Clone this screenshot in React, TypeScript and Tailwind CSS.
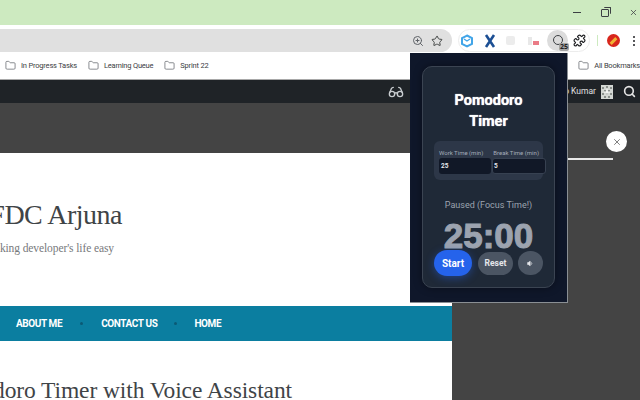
import { Folder, Glasses, Puzzle, Search, Star, Volume1, X, ZoomIn } from "lucide-react";

const bookmarks = ["In Progress Tasks", "Learning Queue", "Sprint 22"];

function Bookmark({ label }: { label: string }) {
  return (
    <div className="flex items-center gap-[5px]">
      <Folder className="h-[11px] w-[11px] text-[#5f6368]" strokeWidth={1.6} />
      <span className="font-['Roboto',sans-serif] text-[7.5px] tracking-[-0.2px] text-[#3c4043]">{label}</span>
    </div>
  );
}

function QrCode() {
  return (
    <svg width="12" height="14" viewBox="0 0 12 14" className="shrink-0">
      <rect width="12" height="14" fill="#d4d8d4" />
      <path d="M1 2h2v2H1zM5 1h2v2H5zM9 2h2v2H9zM3 5h2v2H3zM7 5h2v2H7zM1 8h2v2H1zM5 8h2v2H5zM9 8h2v2H9zM3 11h2v2H3zM7 11h2v2H7z" fill="#8a908c" />
      <path d="M6 4v6M3 7h6" stroke="#fff" strokeWidth="1" />
    </svg>
  );
}

function Toolbar() {
  return (
    <div className="flex h-[23px] shrink-0 items-center">
      <div className="flex h-full w-[452px] items-center justify-end gap-[7px] rounded-r-full bg-[#e0e0e0] pr-[9px]">
        <ZoomIn className="h-[12px] w-[12px] text-[#5f6368]" />
        <Star className="h-[12px] w-[12px] text-[#444746]" />
      </div>
      <div className="ml-[6px] flex h-full w-[132px] items-center rounded-full border border-[#ececec]">
        <svg width="14" height="14" viewBox="0 0 14 14" className="ml-[1px]">
          <path d="M7 1.5 12 4v6l-5 2.5L2 10V4z" fill="none" stroke="#42a5e8" strokeWidth="2" />
          <path d="M4 5l3 2 3-2" fill="none" stroke="#42a5e8" strokeWidth="1.4" />
        </svg>
        <svg width="12" height="14" viewBox="0 0 12 14" className="ml-[10px]">
          <path d="M2 1l8 12M10 1 2 13" stroke="#1c4f94" strokeWidth="2.6" />
        </svg>
        <div className="ml-[10px] h-[9px] w-[9px] rounded-[2px] bg-[#ececec]" />
        <div className="ml-[13px] flex h-[9px] w-[11px] items-end gap-[1px]">
          <div className="h-[8px] w-[4px] bg-[#e8e8e8]" />
          <div className="h-[4px] w-[6px] bg-[#ea7b86]" />
        </div>
        <div className="relative ml-[8px] flex h-[21px] w-[21px] items-center justify-center rounded-full bg-[#dcdcdc]">
          <div className="mt-[-2px] h-[10px] w-[10px] rounded-full border-[1.5px] border-[#3c4043]" />
          <span className="absolute right-[-1px] bottom-[0px] rounded-[2px] bg-[#a5a5a5] px-[1px] text-[7px] leading-[8px] font-bold text-[#222]">25</span>
        </div>
        <Puzzle className="ml-[5px] h-[13px] w-[13px] text-[#202124]" strokeWidth={2.2} />
      </div>
      <div className="ml-[7px] h-[11px] w-px bg-[#cdeac0]" />
      <div className="ml-[9px] flex h-[13px] w-[13px] items-center justify-center rounded-full bg-[#d8261c]">
        <div className="h-[8px] w-[3px] rotate-45 bg-[#f2b233]" />
      </div>
      <div className="ml-[13px] flex flex-col gap-[2px]">
        <div className="h-[2px] w-[2px] rounded-full bg-[#202124]" />
        <div className="h-[2px] w-[2px] rounded-full bg-[#202124]" />
        <div className="h-[2px] w-[2px] rounded-full bg-[#202124]" />
      </div>
    </div>
  );
}

function PomodoroPopup() {
  return (
    <div className="absolute top-[53px] left-[410px] h-[250px] w-[158px] border-r border-b border-[#8a8f94] bg-[#0f172a] px-[12px] pt-[13px] font-['Roboto',sans-serif]">
      <div className="flex h-[222px] w-[133px] flex-col items-center rounded-[10px] border border-[#3b4452] bg-[#1f2937] shadow-[0_0_8px_rgba(0,0,0,0.4)]">
        <h1 className="mt-[24px] w-[90px] text-center text-[14.5px] leading-[20.5px] font-bold text-white [text-shadow:0_0_1px_#ffffff]">
          Pomodoro Timer
        </h1>
        <div className="mt-[9px] ml-[11px] w-[109px] self-start rounded-[6px] bg-[#2d3748] pt-[8px] pb-[6px] pl-[5px]">
          <div className="flex gap-[10px] text-[6px] leading-[8px] text-[#a3abb8]">
            <span>Work Time (min)</span>
            <span>Break Time (min)</span>
          </div>
          <div className="mt-[1px] flex w-[107px] gap-px">
            <div className="h-[16px] w-[52px] shrink-0 rounded-[3px] bg-[#111827] pl-[2px] text-[6.5px] leading-[16px] font-bold text-[#e5e7eb]">25</div>
            <div className="h-[16px] w-[54px] shrink-0 rounded-[3px] border border-[#374151] bg-[#111827] pl-[1px] text-[6.5px] leading-[14px] font-bold text-[#e5e7eb]">5</div>
          </div>
        </div>
        <p className="mt-[18px] text-[9px] leading-[14px] text-[#9ca3af]">Paused (Focus Time!)</p>
        <p className="mt-[6px] font-['Liberation_Sans',sans-serif] text-[35px] leading-[36px] font-bold text-[#9ca3af] [-webkit-text-stroke:1px_#9ca3af]">25:00</p>
        <div className="mt-[-4px] flex items-center self-start pl-[11px]">
          <button className="h-[26px] w-[38px] rounded-full bg-[#2563eb] text-[10px] font-bold text-white shadow-[0_2px_8px_rgba(37,99,235,0.45)]">Start</button>
          <button className="ml-[6px] h-[23px] w-[35px] rounded-full bg-[#4b5563] text-[8.5px] font-bold text-[#e5e7eb]">Reset</button>
          <button className="ml-[5px] flex h-[24px] w-[25px] items-center justify-center rounded-full bg-[#4b5563]">
            <Volume1 className="h-[7px] w-[7px] text-[#e5e7eb]" fill="#e5e7eb" />
          </button>
        </div>
      </div>
    </div>
  );
}

export default function App() {
  return (
    <div className="relative flex h-[400px] w-[640px] flex-col overflow-hidden bg-white">
      <div className="flex h-[25px] shrink-0 items-center justify-end gap-[20px] bg-[#cdeac0] pr-[2px] text-[#3c4043]">
        <div className="h-[1.5px] w-[8px] bg-[#3c4043]" />
        <div className="relative h-[8px] w-[8px] rounded-[1px] border border-[#3c4043]">
          <div className="absolute -top-[3px] -right-[3px] h-[7px] w-[7px] rounded-[1px] border-t border-r border-[#3c4043]" />
        </div>
        <X className="h-[9px] w-[9px]" strokeWidth={2} />
      </div>
      <div className="h-[4px] shrink-0" />
      <Toolbar />
      <div className="flex h-[27px] shrink-0 items-center gap-[11px] pl-[5px]">
        {bookmarks.map((b) => (
          <Bookmark key={b} label={b} />
        ))}
        <div className="ml-auto flex items-center gap-[5px]">
          <Folder className="h-[11px] w-[11px] text-[#5f6368]" strokeWidth={1.6} />
          <span className="font-['Roboto',sans-serif] text-[7.5px] tracking-[-0.2px] whitespace-nowrap text-[#3c4043]">All Bookmarks</span>
        </div>
      </div>
      <div className="flex h-[24px] shrink-0 items-center border-t border-[#a8a8a8] bg-[#1f2327] pr-[4px] pl-[388px]">
        <Glasses className="h-[16px] w-[16px] text-[#c9cdd0]" />
        <span className="ml-auto font-['Roboto',sans-serif] text-[8.5px] text-[#e0e0e0]">o Kumar</span>
        <div className="ml-[5px]">
          <QrCode />
        </div>
        <Search className="ml-[10px] h-[13px] w-[13px] text-[#e5e5e5]" strokeWidth={3} />
      </div>
      <div className="flex min-h-0 flex-1">
        <div className="flex w-[452px] shrink-0 flex-col">
          <div className="h-[50px] shrink-0 bg-[#444444]" />
          <div className="mt-[47px] flex w-[122px] shrink-0 justify-end font-['Liberation_Serif',serif] text-[28px] leading-[30px] tracking-[-0.5px] whitespace-nowrap text-[#3f4447]">
            FDC Arjuna
          </div>
          <div className="mt-[10px] flex w-[114px] shrink-0 justify-end font-['Liberation_Serif',serif] text-[11.5px] leading-[16px] tracking-[-0.1px] whitespace-nowrap text-[#77797c]">
            Making developer's life easy
          </div>
          <div className="mt-[50px] flex h-[35px] shrink-0 items-center bg-[#0b7ea0] pl-[16px] font-['Roboto',sans-serif] text-[10px] font-bold tracking-[-0.4px] text-white">
            <span>ABOUT ME</span>
            <span className="mx-[18px] h-[3px] w-[3px] rounded-full bg-[#0b5a75]" />
            <span>CONTACT US</span>
            <span className="mx-[17px] h-[3px] w-[3px] rounded-full bg-[#0b5a75]" />
            <span>HOME</span>
          </div>
          <div className="mt-[34px] flex w-[292px] shrink-0 justify-end font-['Liberation_Serif',serif] text-[23.5px] leading-[30px] tracking-[-0.1px] whitespace-nowrap text-[#3f4447]">
            Pomodoro Timer with Voice Assistant
          </div>
        </div>
        <div className="flex-1 bg-[#444444]">
          <div className="relative mt-[55px] ml-[116px] h-[2px] w-[45px] bg-[#e8e8e8]">
            <div className="absolute -top-[27px] left-[38px] flex h-[21px] w-[21px] items-center justify-center rounded-full bg-white">
              <X className="h-[10px] w-[10px] text-[#666]" strokeWidth={2} />
            </div>
          </div>
        </div>
      </div>
      <PomodoroPopup />
    </div>
  );
}
